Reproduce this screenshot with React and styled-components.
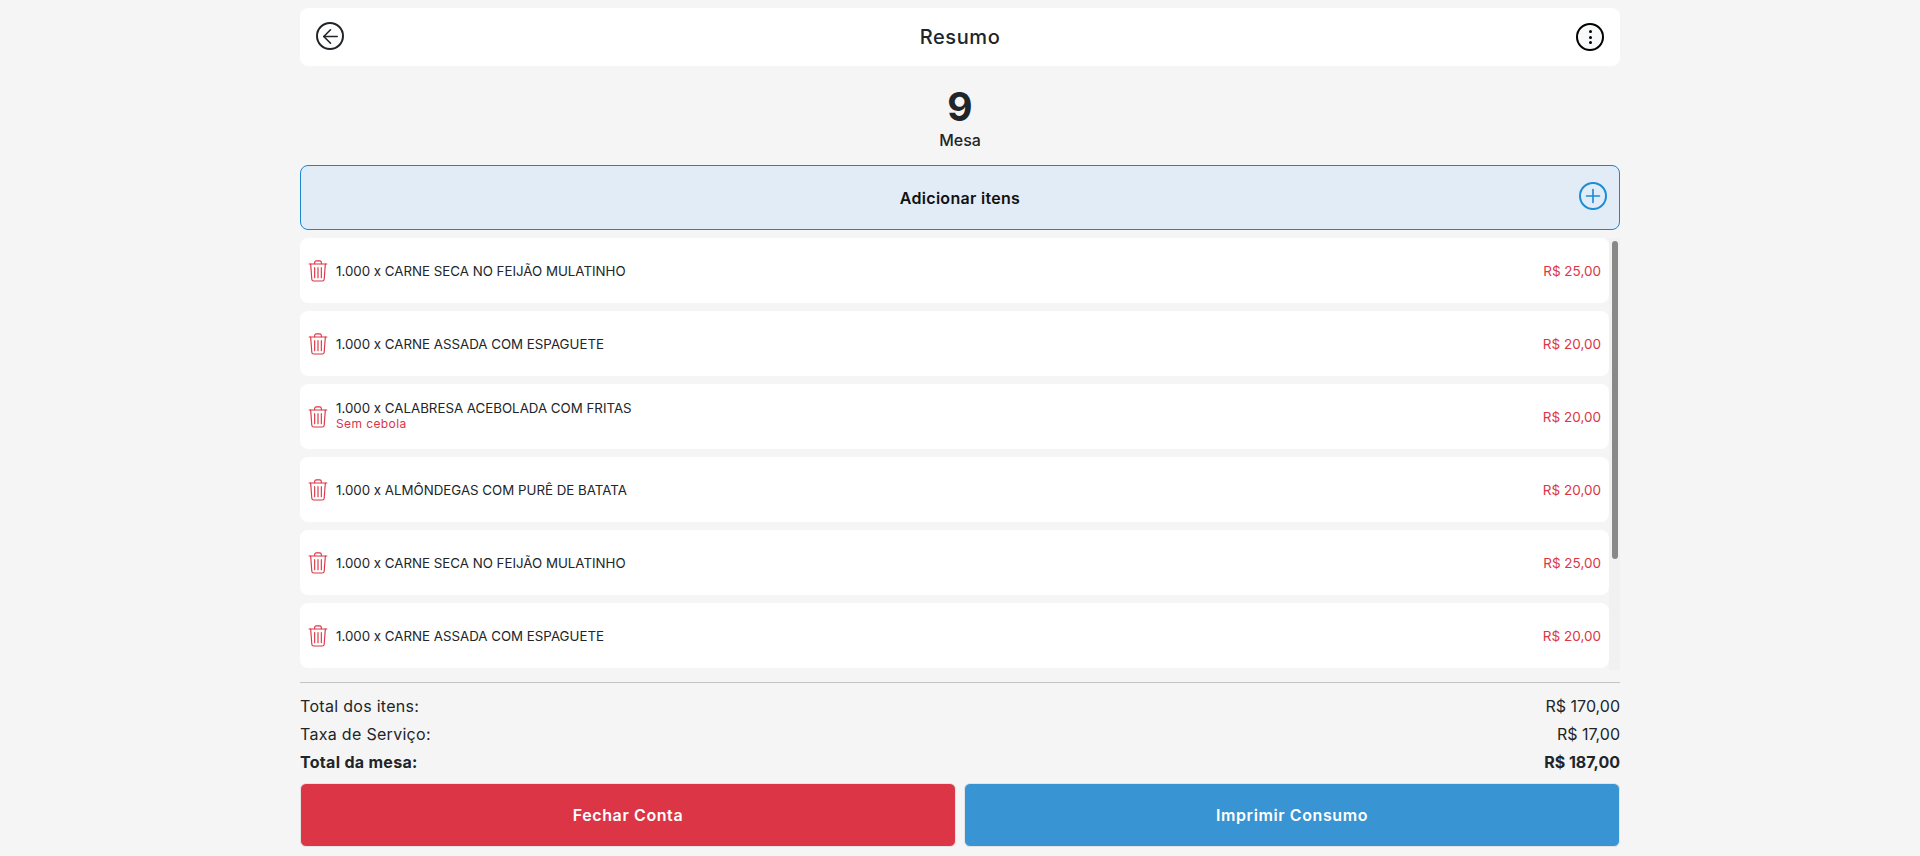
import styled, { createGlobalStyle } from "styled-components";
import { ArrowLeft, Plus } from "lucide-react";

const items = [
  { id: 1, name: "CARNE SECA NO FEIJÃO MULATINHO", price: "R$ 25,00" },
  { id: 2, name: "CARNE ASSADA COM ESPAGUETE", price: "R$ 20,00" },
  { id: 3, name: "CALABRESA ACEBOLADA COM FRITAS", note: "Sem cebola", price: "R$ 20,00" },
  { id: 4, name: "ALMÔNDEGAS COM PURÊ DE BATATA", price: "R$ 20,00" },
  { id: 5, name: "CARNE SECA NO FEIJÃO MULATINHO", price: "R$ 25,00" },
  { id: 6, name: "CARNE ASSADA COM ESPAGUETE", price: "R$ 20,00" },
];

const TrashIcon = () => (
  <svg width="20" height="24" viewBox="0 0 21 24" fill="none" stroke="#dc3545" strokeWidth="1.2" strokeLinecap="round" strokeLinejoin="round">
    <path d="M1.2 4.6h18.6" />
    <path d="M7 4.4V3a1.7 1.7 0 0 1 1.7-1.7h3.6A1.7 1.7 0 0 1 14 3v1.4" />
    <path d="M2.8 4.8 4 20.6a2 2 0 0 0 2 1.9h9a2 2 0 0 0 2-1.9l1.2-15.8" />
    <path d="M7 8.5v10.5M10.5 8.5v10.5M14 8.5v10.5" />
  </svg>
);

const App = () => {
  return (
    <Page>
      <GlobalStyle />
      <Header>
        <BackButton><ArrowLeft size={23} strokeWidth={1.7} color="#212529" /></BackButton>
        <Title>Resumo</Title>
        <MenuButton><Dot /><Dot /><Dot /></MenuButton>
      </Header>

      <TableInfo>
        <TableNumber>9</TableNumber>
        <TableLabel>Mesa</TableLabel>
      </TableInfo>

      <AddButton>
        <span>Adicionar itens</span>
        <AddIcon><Plus size={22} strokeWidth={1.8} color="#1a8cd8" /></AddIcon>
      </AddButton>

      <ListArea>
        <ItemList>
          {items.map((item) => (
            <ItemRow key={item.id}>
              <TrashIcon />
              <ItemText>
                <ItemName>1.000 x {item.name}</ItemName>
                {item.note && <ItemNote>{item.note}</ItemNote>}
              </ItemText>
              <ItemPrice>{item.price}</ItemPrice>
            </ItemRow>
          ))}
        </ItemList>
        <ScrollTrack><ScrollThumb /></ScrollTrack>
      </ListArea>

      <Totals>
        <TotalRow><span>Total dos itens:</span><TotalValue>R$ 170,00</TotalValue></TotalRow>
        <TotalRow><span>Taxa de Serviço:</span><TotalValue>R$ 17,00</TotalValue></TotalRow>
        <TotalRow $bold><span>Total da mesa:</span><TotalValue>R$ 187,00</TotalValue></TotalRow>
      </Totals>

      <Actions>
        <ActionButton $color="#dc3545">Fechar Conta</ActionButton>
        <ActionButton $color="#3894d2">Imprimir Consumo</ActionButton>
      </Actions>
    </Page>
  );
};

export default App;

const GlobalStyle = createGlobalStyle`
  * { box-sizing: border-box; }
  body {
    margin: 0;
    background: #f5f5f5;
    color: #212529;
    font-family: Inter, "Open Sans", sans-serif;
  }
`;

const Page = styled.div`
  width: 1320px;
  height: 856px;
  margin: 0 auto;
  padding-top: 8px;
  display: flex;
  flex-direction: column;
`;

const Header = styled.div`
  height: 58px;
  padding: 0 16px;
  display: flex;
  align-items: center;
  justify-content: space-between;
  background: #fff;
  border-radius: 8px;
`;

const IconButton = styled.div`
  width: 28px;
  height: 28px;
  display: flex;
  align-items: center;
  justify-content: center;
  border: 2px solid #212529;
  border-radius: 50%;
`;

const BackButton = styled(IconButton)`
  margin-bottom: 2px;
`;

const MenuButton = styled(IconButton)`
  flex-direction: column;
  gap: 2.5px;
  border-color: #000;
  background: #f8f9fa;
`;

const Dot = styled.span`
  width: 3px;
  height: 3px;
  background: #000;
  border-radius: 50%;
`;

const Title = styled.h1`
  margin: 0;
  font-size: 20px;
  font-weight: 500;
  letter-spacing: 0.6px;
`;

const TableInfo = styled.div`
  height: 99px;
  padding-top: 19px;
  display: flex;
  flex-direction: column;
  align-items: center;
`;

const TableNumber = styled.div`
  font-size: 39px;
  line-height: 44px;
  font-weight: 700;
`;

const TableLabel = styled.div`
  margin-top: 1px;
  font-size: 16px;
  line-height: 20px;
  font-weight: 500;
`;

const AddButton = styled.div`
  position: relative;
  height: 65px;
  flex-shrink: 0;
  display: flex;
  align-items: center;
  justify-content: center;
  background: #e2ecf7;
  border: 1px solid #1a86cf;
  border-radius: 8px;
  font-size: 16px;
  font-weight: 600;
  letter-spacing: 0.3px;
  color: #111;
`;

const AddIcon = styled.div`
  position: absolute;
  right: 12px;
  top: 16px;
  width: 28px;
  height: 28px;
  display: flex;
  align-items: center;
  justify-content: center;
  border: 2px solid #1a8cd8;
  border-radius: 50%;
`;

const ListArea = styled.div`
  height: 432px;
  margin-top: 8px;
  flex-shrink: 0;
  display: flex;
`;

const ItemList = styled.div`
  flex: 1;
  display: flex;
  flex-direction: column;
  gap: 8px;
`;

const ScrollTrack = styled.div`
  width: 11px;
  padding: 3px 2px 0 3px;
  background: #f1f1f1;
`;

const ScrollThumb = styled.div`
  height: 318px;
  background: #888;
  border-radius: 3px;
`;

const ItemRow = styled.div`
  height: 65px;
  flex-shrink: 0;
  padding: 0 8px;
  display: flex;
  align-items: center;
  gap: 8px;
  background: #fff;
  border-radius: 8px;
`;

const ItemText = styled.div`
  flex: 1;
  display: flex;
  flex-direction: column;
  color: #212529;
`;

const ItemName = styled.div`
  font-size: 13.3px;
  line-height: 18px;
`;

const ItemNote = styled.div`
  margin-bottom: 3px;
  font-size: 12px;
  line-height: 14px;
  letter-spacing: 0.4px;
  color: #dc3545;
`;

const ItemPrice = styled.div`
  font-size: 13.5px;
  color: #dc3545;
`;

const Totals = styled.div`
  margin-top: 12px;
  padding-top: 11px;
  border-top: 1px solid #c4c4c4;
  display: flex;
  flex-direction: column;
  gap: 4px;
`;

const TotalRow = styled.div`
  display: flex;
  justify-content: space-between;
  font-size: 16px;
  line-height: 24px;
  letter-spacing: 0.3px;
  font-weight: ${(props) => (props.$bold ? 700 : 400)};
`;

const TotalValue = styled.span`
  letter-spacing: 0;
`;

const Actions = styled.div`
  margin-top: 9px;
  display: flex;
  gap: 8px;
`;

const ActionButton = styled.div`
  flex: 1;
  height: 64px;
  display: flex;
  align-items: center;
  justify-content: center;
  background: ${(props) => props.$color};
  color: #fff;
  border: 1px solid #e4e4e4;
  border-radius: 6px;
  font-size: 16px;
  font-weight: 600;
  letter-spacing: 0.6px;
`;
